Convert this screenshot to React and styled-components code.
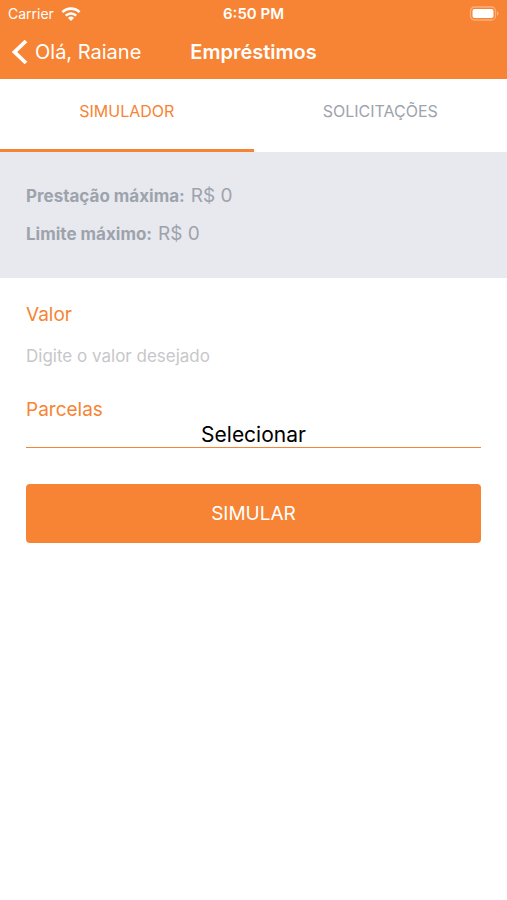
import { useState } from "react";
import styled, { createGlobalStyle } from "styled-components";

const colors = {
  orange: "#f78434",
  gray: "#9da3ad",
  panel: "#e8e9ee",
  placeholder: "#c7c7ca",
};

const GlobalStyle = createGlobalStyle`
  * {
    box-sizing: border-box;
  }
  body {
    margin: 0;
    background: #fff;
    font-family: Inter, "Liberation Sans", sans-serif;
  }
  button, input, select {
    font-family: inherit;
  }
`;

const Header = styled.header`
  padding-bottom: 2px;
  background: ${colors.orange};
  color: #fff;
`;

const Bar = styled.div`
  display: grid;
  grid-template-columns: 1fr auto 1fr;
  align-items: center;
  height: ${(props) => props.$height};
  padding: 0 8px;
`;

const Carrier = styled.span`
  display: flex;
  align-items: center;
  gap: 7px;
  font-size: 14px;
`;

const Clock = styled.time`
  font-size: 15px;
  font-weight: 600;
`;

const Battery = styled.svg`
  justify-self: end;
`;

const BackButton = styled.button`
  display: flex;
  align-items: center;
  justify-self: start;
  gap: 7px;
  padding: 0 0 0 4px;
  border: 0;
  background: none;
  color: inherit;
  font-size: 20px;
  line-height: 28px;
`;

const Title = styled.h1`
  margin: 0;
  font-size: 20px;
  font-weight: 600;
  line-height: 28px;
`;

const Tabs = styled.nav`
  display: grid;
  grid-template-columns: 1fr 1fr;
`;

const Tab = styled.button`
  height: 73px;
  padding: 0 0 6px;
  border: 0;
  border-bottom: 3px solid
    ${(props) => (props.$active ? colors.orange : "transparent")};
  background: #fff;
  color: ${(props) => (props.$active ? colors.orange : colors.gray)};
  font-size: 16px;
`;

const Limits = styled.dl`
  display: grid;
  gap: 10px;
  margin: 0;
  padding: 30px 26px;
  background: ${colors.panel};
  color: ${colors.gray};
`;

const LimitRow = styled.div`
  display: flex;
  align-items: center;
  gap: 6px;
  line-height: 28px;
`;

const LimitName = styled.dt`
  font-size: 17px;
  font-weight: 700;
`;

const LimitValue = styled.dd`
  margin: 0;
  font-size: 19px;
`;

const Form = styled.form`
  display: flex;
  flex-direction: column;
  padding: 23px 26px;
`;

const Label = styled.label`
  color: ${colors.orange};
  font-size: 19px;
  line-height: 28px;
`;

const Input = styled.input`
  height: 44px;
  margin: 5px 0 18px;
  padding: 0;
  border: 0;
  outline: none;
  font-size: 17px;
  &::placeholder {
    color: ${colors.placeholder};
  }
`;

const Select = styled.select`
  height: 24px;
  padding: 0 0 2px;
  border: 0;
  border-bottom: 1px solid ${colors.orange};
  border-radius: 0;
  outline: none;
  appearance: none;
  background: #fff;
  color: #000;
  font-size: 21px;
  line-height: 22px;
  text-align: center;
  text-align-last: center;
`;

const SubmitButton = styled.button`
  height: 59px;
  margin-top: 36px;
  border: 0;
  border-radius: 4px;
  background: ${colors.orange};
  color: #fff;
  font-size: 19px;
`;

const WifiIcon = () => (
  <svg width="20" height="14" viewBox="0 0 20 14" aria-hidden="true">
    <g fill="none" stroke="#fff" strokeWidth="2.6">
      <path d="M1.4 5.2a12.2 12.2 0 0 1 17.2 0" />
      <path d="M4.8 8.7a7.4 7.4 0 0 1 10.4 0" />
    </g>
    <path d="M10 14l-3-3.1a4.3 4.3 0 0 1 6 0z" fill="#fff" />
  </svg>
);

const BatteryIcon = () => (
  <Battery width="30" height="16" viewBox="0 0 30 16" aria-hidden="true">
    <rect
      x="1.5"
      y="1"
      width="25"
      height="13"
      rx="4"
      fill="none"
      stroke="#fff"
      strokeOpacity="0.35"
      strokeWidth="1.3"
    />
    <rect x="3.5" y="3" width="21" height="9" rx="2" fill="#fff" />
    <path d="M28 5.3c2 .8 2 3.6 0 4.4z" fill="#fff" fillOpacity="0.4" />
  </Battery>
);

const BackIcon = () => (
  <svg width="16" height="26" viewBox="0 0 16 26" aria-hidden="true">
    <path
      d="M14 2L2.6 13L14 24"
      fill="none"
      stroke="#fff"
      strokeWidth="3.8"
    />
  </svg>
);

const tabs = ["SIMULADOR", "SOLICITAÇÕES"];

const limits = [
  { name: "Prestação máxima:", value: "R$ 0" },
  { name: "Limite máximo:", value: "R$ 0" },
];

const App = () => {
  const [activeTab, setActiveTab] = useState(tabs[0]);
  const [amount, setAmount] = useState("");
  return (
    <>
      <GlobalStyle />
      <Header>
        <Bar $height="27px">
          <Carrier>
            Carrier
            <WifiIcon />
          </Carrier>
          <Clock>6:50 PM</Clock>
          <BatteryIcon />
        </Bar>
        <Bar $height="50px">
          <BackButton type="button">
            <BackIcon />
            Olá, Raiane
          </BackButton>
          <Title>Empréstimos</Title>
        </Bar>
      </Header>
      <Tabs>
        {tabs.map((tab) => (
          <Tab
            key={tab}
            type="button"
            $active={tab === activeTab}
            onClick={() => setActiveTab(tab)}
          >
            {tab}
          </Tab>
        ))}
      </Tabs>
      <main>
        <Limits>
          {limits.map((limit) => (
            <LimitRow key={limit.name}>
              <LimitName>{limit.name}</LimitName>
              <LimitValue>{limit.value}</LimitValue>
            </LimitRow>
          ))}
        </Limits>
        <Form onSubmit={(e) => e.preventDefault()}>
          <Label htmlFor="valor">Valor</Label>
          <Input
            id="valor"
            inputMode="decimal"
            placeholder="Digite o valor desejado"
            value={amount}
            onChange={(e) => setAmount(e.target.value)}
          />
          <Label htmlFor="parcelas">Parcelas</Label>
          <Select id="parcelas">
            <option>Selecionar</option>
          </Select>
          <SubmitButton type="submit">SIMULAR</SubmitButton>
        </Form>
      </main>
    </>
  );
};

export default App;
